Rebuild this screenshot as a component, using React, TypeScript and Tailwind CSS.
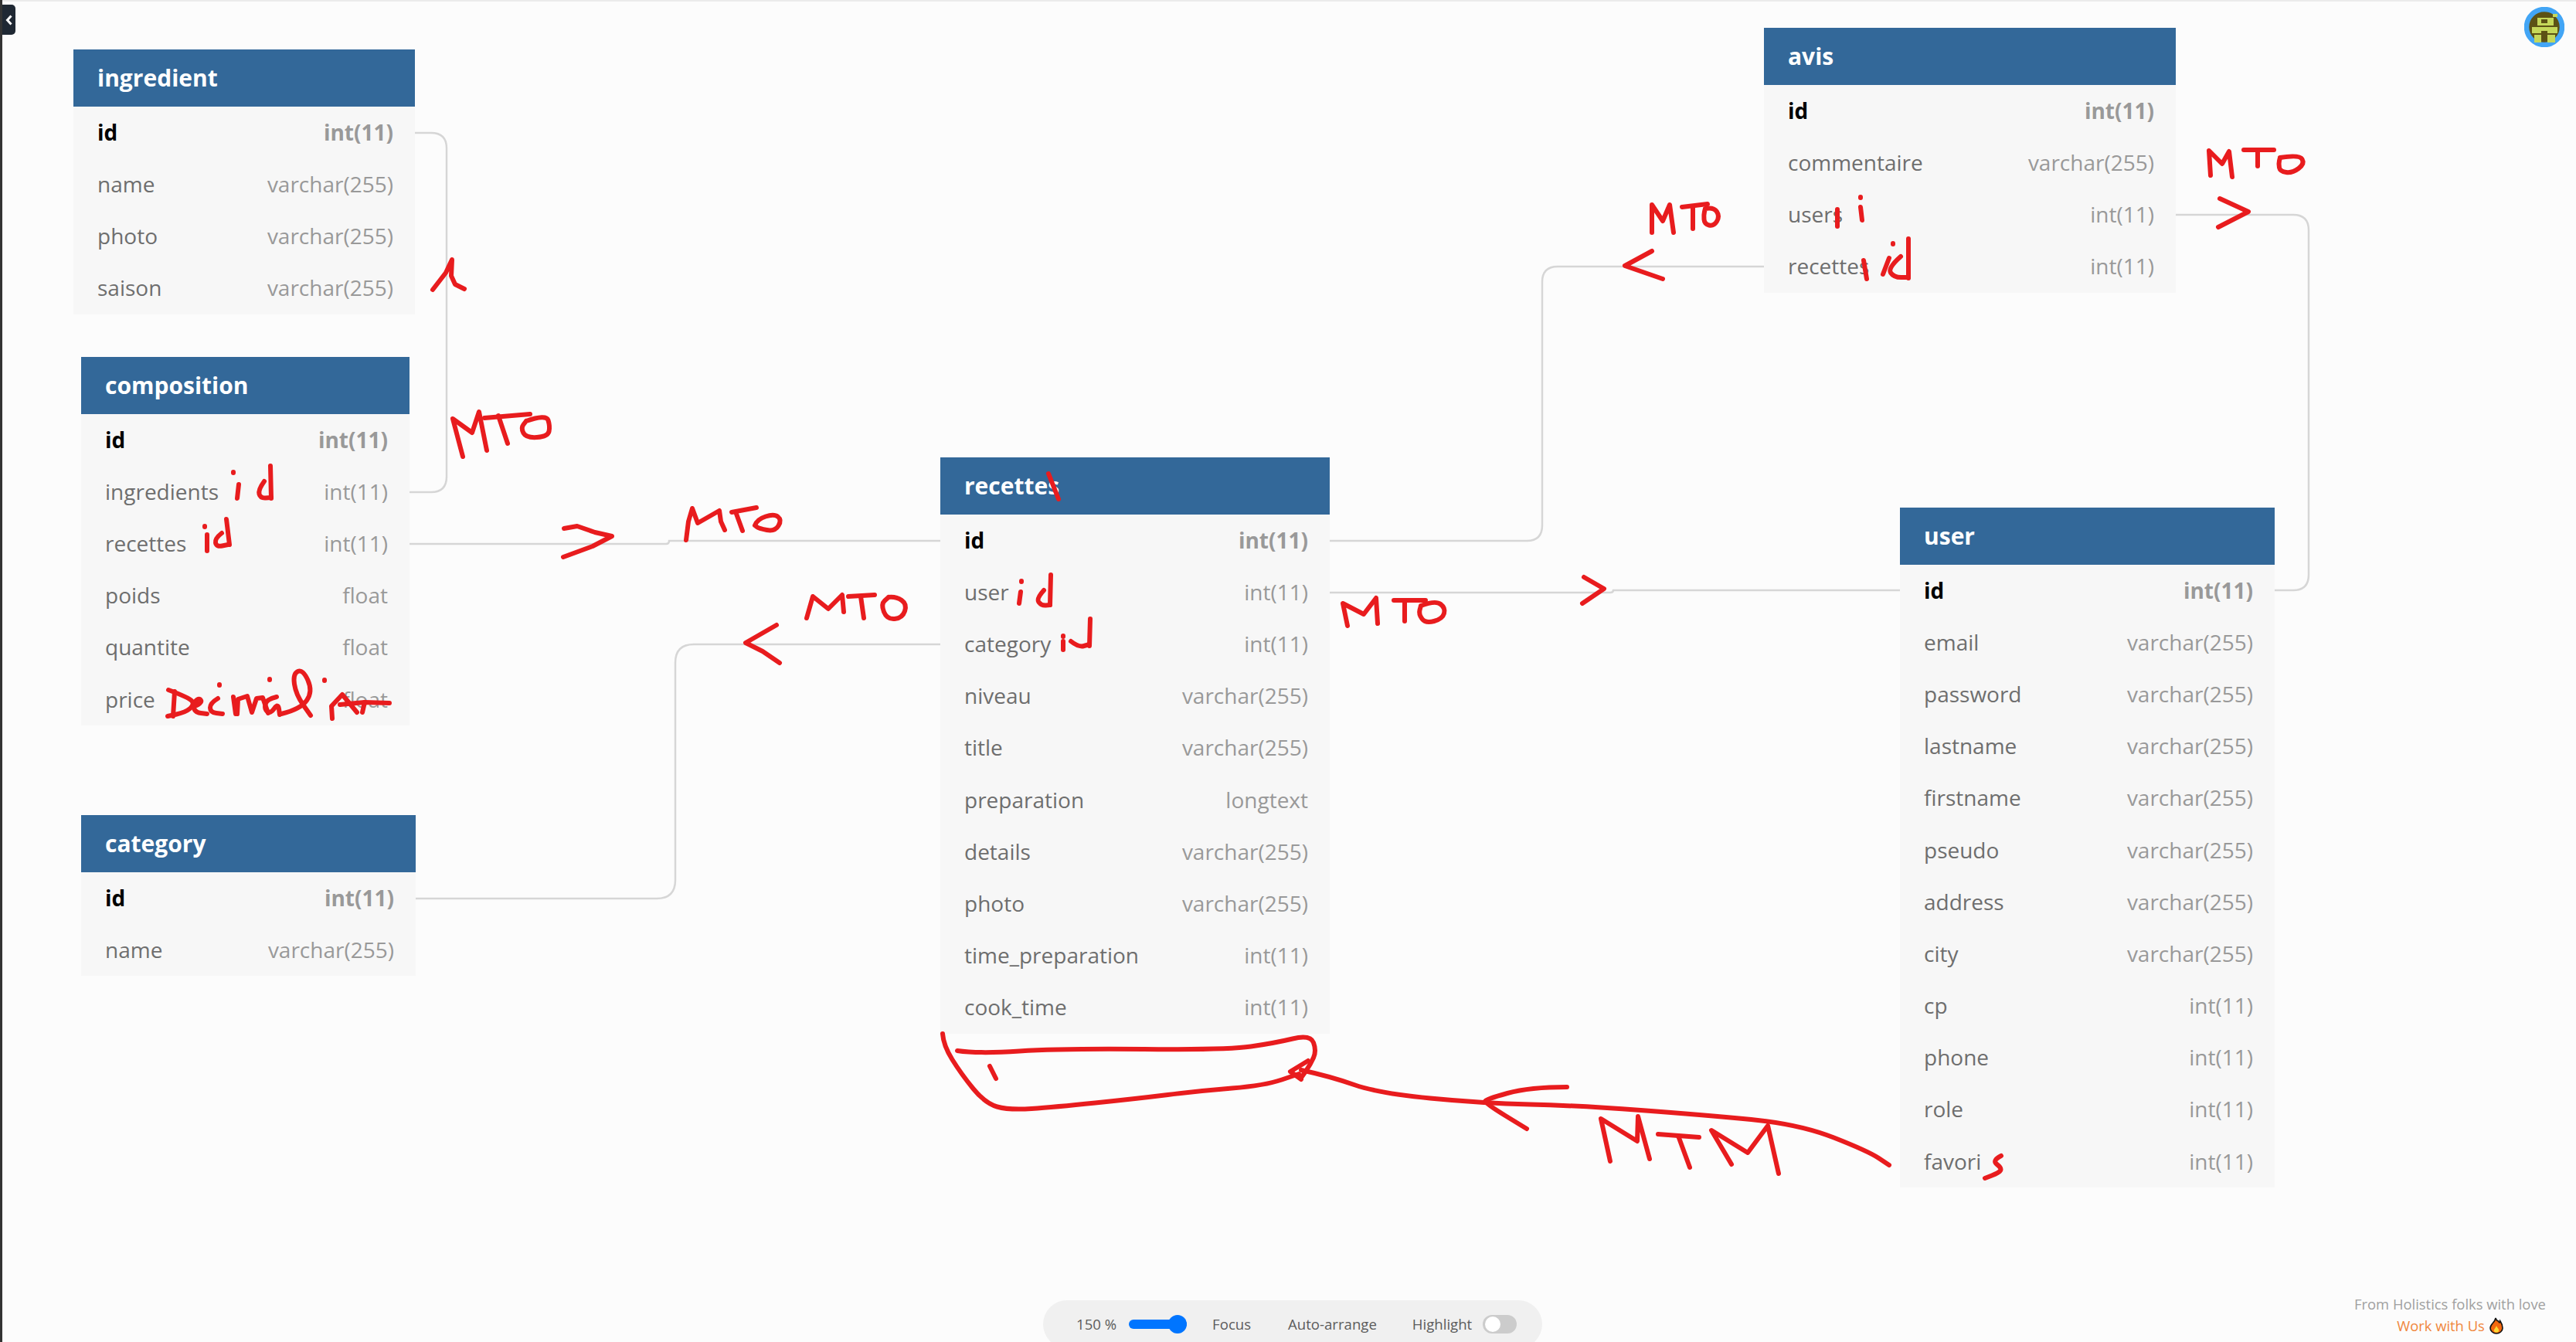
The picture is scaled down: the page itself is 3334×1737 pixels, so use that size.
import React from "react";

interface Field {
  name: string;
  type: string;
  pk?: boolean;
}

interface TableNode {
  name: string;
  pos: string;
  fields: Field[];
}

const v = "varchar(255)";
const i = "int(11)";

const tables: TableNode[] = [
  {
    name: "ingredient",
    pos: "left-[95px] top-[64px] w-[442px]",
    fields: [
      { name: "id", type: i, pk: true },
      { name: "name", type: v },
      { name: "photo", type: v },
      { name: "saison", type: v },
    ],
  },
  {
    name: "composition",
    pos: "left-[105px] top-[462px] w-[425px]",
    fields: [
      { name: "id", type: i, pk: true },
      { name: "ingredients", type: i },
      { name: "recettes", type: i },
      { name: "poids", type: "float" },
      { name: "quantite", type: "float" },
      { name: "price", type: "float" },
    ],
  },
  {
    name: "category",
    pos: "left-[105px] top-[1055px] w-[433px]",
    fields: [
      { name: "id", type: i, pk: true },
      { name: "name", type: v },
    ],
  },
  {
    name: "recettes",
    pos: "left-[1217px] top-[592px] w-[504px]",
    fields: [
      { name: "id", type: i, pk: true },
      { name: "user", type: i },
      { name: "category", type: i },
      { name: "niveau", type: v },
      { name: "title", type: v },
      { name: "preparation", type: "longtext" },
      { name: "details", type: v },
      { name: "photo", type: v },
      { name: "time_preparation", type: i },
      { name: "cook_time", type: i },
    ],
  },
  {
    name: "avis",
    pos: "left-[2283px] top-[36px] w-[533px]",
    fields: [
      { name: "id", type: i, pk: true },
      { name: "commentaire", type: v },
      { name: "users", type: i },
      { name: "recettes", type: i },
    ],
  },
  {
    name: "user",
    pos: "left-[2459px] top-[657px] w-[485px]",
    fields: [
      { name: "id", type: i, pk: true },
      { name: "email", type: v },
      { name: "password", type: v },
      { name: "lastname", type: v },
      { name: "firstname", type: v },
      { name: "pseudo", type: v },
      { name: "address", type: v },
      { name: "city", type: v },
      { name: "cp", type: i },
      { name: "phone", type: i },
      { name: "role", type: i },
      { name: "favori", type: i },
    ],
  },
];

const connectors = [
  "M537 172 H558 Q578 172 578 192 V617 Q578 637 558 637 H530",
  "M530 704 H862 Q866 704 866 700 H1217",
  "M538 1163 H850 Q874 1163 874 1139 V858 Q874 834 898 834 H1217",
  "M1721 700 H1976 Q1996 700 1996 680 V365 Q1996 345 2016 345 H2283",
  "M1721 767 H2084 Q2088 767 2088 764 H2459",
  "M2816 278 H2968 Q2988 278 2988 298 V744 Q2988 764 2968 764 H2944",
];

// hand-drawn red annotations on top of the diagram
const ink = [
  "560,375 577,353 585,336 584,357 589,368 601,374",
  "599,591 586,542 611,560 620,533 630,583",
  "627,541 686,536",
  "645,538 657,574",
  // id on composition.ingredients
  "302,611 302,612",
  "309,627 307,645",
  "350,603 351,645",
  // id on composition.recettes
  "265,681 265,682",
  "268,692 268,713",
  "293,672 297,705",
  // Decimal on composition.price
  "226,895 224,927",
  "302,902 305,924",
  "284,886 284,887",
  "307,924 308,905 320,901 326,922 332,904 340,903 347,923",
  "349,879 349,880",
  "420,880 420,881",
  "430,930 429,914 443,899 462,922",
  "440,912 472,909 504,910",
  "472,909 469,922",
  // composition -> recettes
  "730,684 747,681 770,689 792,694 767,707 729,721",
  "888,699 891,675 896,658 903,677 931,661 933,675 938,686",
  "947,663 979,657",
  "953,665 961,687",
  // category -> recettes
  "1005,809 965,832 987,843 1009,858",
  "1044,800 1052,772 1072,788 1090,770 1092,792",
  "1098,772 1132,770",
  "1114,772 1118,800",
  // avis side
  "2138,301 2138,265 2152,286 2161,265 2166,301",
  "2177,268 2210,264",
  "2191,268 2191,296",
  "2138,325 2103,344 2152,361",
  "2378,271 2378,293",
  "2408,255 2408,256",
  "2408,268 2410,285",
  "2412,337 2416,361",
  "2450,315 2450,316",
  "2445,334 2437,355",
  "2470,309 2470,360",
  "2861,227 2859,195 2876,212 2885,196 2889,229",
  "2904,194 2943,194",
  "2922,196 2922,215",
  "2873,257 2910,274 2871,294",
  // recettes fields
  "1357,613 1370,646",
  "1322,752 1322,753",
  "1321,766 1319,781",
  "1360,744 1359,783",
  "1376,823 1376,824",
  "1376,830 1376,841",
  "1411,801 1410,836",
  // recettes -> user
  "1744,810 1738,781 1765,795 1781,774 1783,807",
  "1804,777 1845,777",
  "1818,778 1818,804",
  "2050,747 2076,762 2048,781",
  // favoris box and MTM
  "1281,1380 1289,1396",
  "1693,1373 1670,1387 1684,1397",
  "2084,1503 2072,1448 2119,1477 2120,1445 2135,1500",
  "2146,1468 2199,1472",
  "2172,1470 2187,1511",
  "2241,1507 2215,1463 2262,1492 2288,1457 2302,1519",
];

// the rounder strokes, drawn through the midpoints of these points
const curves = [
  "681,545 707,536 712,552 709,565 681,567 674,554 681,545",
  "342,623 334,634 337,645 351,644",
  "287,690 278,697 280,708 295,705",
  "218,893 245,903 252,912 240,922 217,927",
  "250,915 262,910 258,903 250,910 252,922 268,924",
  "282,904 272,910 272,922 288,924",
  "358,902 345,905 342,918 350,924 360,910 362,925",
  "364,924 389,918 405,895 392,866 379,872 383,899 402,926",
  "977,680 980,672 1002,665 1012,673 1003,688 982,684 977,680",
  "1150,773 1160,772 1174,782 1168,800 1148,802 1140,782 1150,773",
  "2207,270 2218,268 2226,280 2218,293 2206,290 2205,278 2207,270",
  "2460,332 2443,347 2451,359 2470,359",
  "2951,204 2976,200 2983,212 2967,224 2951,222 2949,212 2951,204",
  "1351,764 1341,775 1348,784 1359,783",
  "1386,830 1396,838 1410,834",
  "1839,784 1858,777 1871,787 1867,801 1845,807 1836,795 1839,784",
  "1220,1338 1221,1353 1244,1390 1275,1428 1306,1437 1364,1433 1471,1422 1552,1412 1637,1405 1681,1390",
  "1239,1360 1266,1364 1373,1357 1588,1359 1650,1350 1696,1339 1704,1360 1696,1378 1684,1395",
  "1684,1385 1721,1393 1784,1415 1918,1428 2043,1431 2204,1443 2329,1455 2418,1490 2445,1508",
  "2028,1407 1980,1407 1922,1423 1922,1428 1976,1461",
  "2590,1496 2578,1502 2591,1512 2587,1518 2569,1525",
];

const smoothPath = (points: string) => {
  const pts = points.split(" ").map((p) => p.split(",").map(Number));
  let d = `M${pts[0][0]} ${pts[0][1]}`;
  for (let n = 1; n < pts.length - 1; n++) {
    const midX = (pts[n][0] + pts[n + 1][0]) / 2;
    const midY = (pts[n][1] + pts[n + 1][1]) / 2;
    d += ` Q${pts[n][0]} ${pts[n][1]} ${midX} ${midY}`;
  }
  const last = pts[pts.length - 1];
  return `${d} L${last[0]} ${last[1]}`;
};

const Table: React.FC<{ table: TableNode }> = ({ table }) => (
  <div className={`absolute ${table.pos}`}>
    <div className="flex h-[74px] items-center bg-[#336899] pb-[2px] pl-[31px] text-[30px] font-bold text-white">
      {table.name}
    </div>
    <div className="bg-[#f7f7f7]">
      {table.fields.map((field) => (
        <div
          key={field.name}
          className="flex h-[67.2px] items-center justify-between pb-[2px] pl-[31px] pr-[28px] text-[28px]"
        >
          <span className={field.pk ? "font-bold text-black" : "text-[#6e6e6e]"}>
            {field.name}
          </span>
          <span className={field.pk ? "font-bold text-[#999999]" : "text-[#999999]"}>
            {field.type}
          </span>
        </div>
      ))}
    </div>
  </div>
);

const Avatar = () => (
  <svg width="52" height="52" viewBox="0 0 52 52" className="absolute left-[3267px] top-[9px]">
    <circle cx="26" cy="26" r="23" fill="#5c5215" stroke="#42a5f5" strokeWidth="6.5" />
    <g fill="#c5d85a">
      <path d="M17 14H38V31H17ZM22 16V21H30V16Z" fillRule="evenodd" />
      <rect x="10" y="26" width="12" height="8" />
      <rect x="30" y="26" width="13" height="8" />
      <rect x="13" y="36" width="9" height="10" />
      <rect x="30" y="36" width="10" height="10" />
      <rect x="37" y="9" width="6" height="4" />
    </g>
    <rect x="22" y="31" width="8" height="3" fill="#5c5215" />
    <rect x="17" y="24" width="21" height="2" fill="#5c5215" />
  </svg>
);

const Flame = () => (
  <svg width="18" height="22" viewBox="0 0 18 22">
    <path
      d="M8 1C9 4 10 5 12 5C12 6 12 7 13 7C14 6 14 5 14 5C16 8 17 11 17 14C17 18 13 21 9 21C5 21 1 18 1 14C1 9 7 7 8 1Z"
      fill="#f4690f"
      stroke="#111111"
      strokeWidth="1.6"
    />
    <path d="M9 11C10 14 13 15 12 18C11 20 7 20 6 18C5 16 8 14 9 11Z" fill="#fdd835" />
  </svg>
);

const App: React.FC = () => {
  return (
    <div className="relative h-[1737px] w-[3334px] overflow-hidden bg-[#fcfcfc] font-['Open_Sans',sans-serif]">
      <div className="absolute inset-x-0 top-0 h-[2px] bg-[#ebebeb]" />
      <div className="absolute inset-y-0 left-0 w-[3px] bg-[#333333]" />

      {/* sidebar toggle */}
      <div className="absolute left-[3px] top-[6px] flex h-[39px] w-[17px] items-center justify-center rounded-r-[5px] bg-[#1f2833]">
        <svg width="10" height="16" viewBox="0 0 10 16">
          <path d="M7.5 2.5 L2.5 8 L7.5 13.5" fill="none" stroke="#ffffff" strokeWidth="3" />
        </svg>
      </div>

      <svg className="absolute left-0 top-0" width="3334" height="1737" fill="none">
        {connectors.map((d) => (
          <path key={d} d={d} stroke="#d6d6d6" strokeWidth="2.5" />
        ))}
      </svg>

      {tables.map((table) => (
        <Table key={table.name} table={table} />
      ))}

      <svg
        className="absolute left-0 top-0"
        width="3334"
        height="1737"
        fill="none"
        stroke="#e81c1e"
        strokeWidth="6"
        strokeLinecap="round"
        strokeLinejoin="round"
        role="img"
        aria-label="Hand-drawn red notes: MTO, MTM, id, Decimal"
      >
        {ink.map((points) => (
          <polyline key={points} points={points} />
        ))}
        {curves.map((points) => (
          <path key={points} d={smoothPath(points)} />
        ))}
      </svg>

      <Avatar />

      {/* bottom toolbar */}
      <div className="absolute left-[1350px] top-[1683px] flex h-[62px] w-[646px] items-center rounded-[36px] bg-[#f0f0f0] pb-[1px] pl-[43px] text-[18.6px] text-[#5c5c5c]">
        <span>150 %</span>
        <div className="relative ml-[16px] h-[12px] w-[75px] rounded-full bg-[#0075ff]">
          <div className="absolute right-0 top-[-6px] h-[24px] w-[24px] rounded-full bg-[#0075ff]" />
        </div>
        <span className="ml-[33px]">Focus</span>
        <span className="ml-[48px]">Auto-arrange</span>
        <span className="ml-[46px]">Highlight</span>
        <div className="ml-[14px] flex h-[24px] w-[44px] items-center rounded-full bg-[#cccccc] pl-[3px]">
          <div className="h-[20px] w-[20px] rounded-full bg-white" />
        </div>
      </div>

      {/* footer credit */}
      <div className="absolute left-[3045px] top-[1674px] flex w-[252px] flex-col items-center text-[18.4px] leading-[28px]">
        <span className="whitespace-nowrap text-[#a0a0a0]">From Holistics folks with love</span>
        <span className="flex items-center gap-[6px] whitespace-nowrap text-[#f0873c]">
          Work with Us <Flame />
        </span>
      </div>
    </div>
  );
};

export default App;
